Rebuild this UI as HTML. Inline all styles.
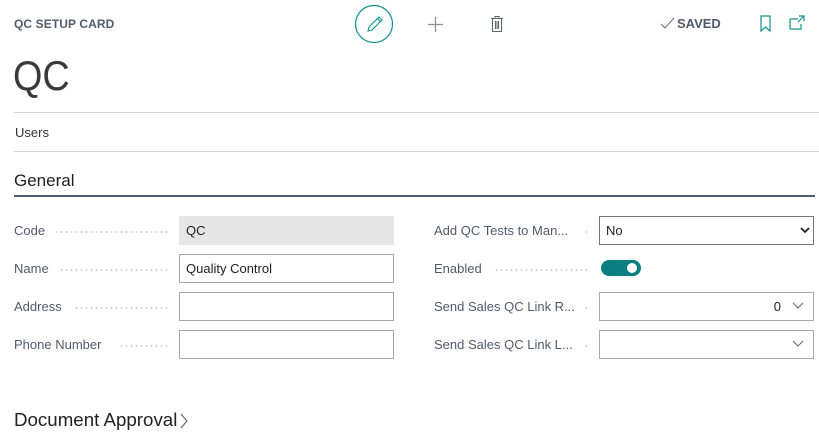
<!DOCTYPE html>
<html><head><meta charset="utf-8"><style>
*{margin:0;padding:0;box-sizing:border-box}
body{width:819px;height:436px;background:#fff;font-family:"Liberation Sans",sans-serif;color:#212121;position:relative;overflow:hidden}
.a{position:absolute;white-space:nowrap}
.lbl{font-size:13px;color:#505C6D}
.dots{position:absolute;height:2px;background:radial-gradient(circle,#b8bcc2 0.7px,transparent 0.9px) 0 0/5px 2px repeat-x}
.inp{position:absolute;height:29px;border:1px solid #a8a8a8;background:#fff;font-size:13px;padding:6px 6px}
</style></head><body>
<div class="a" style="left:14px;top:17px;font-size:12px;font-weight:bold;color:#505C6D;letter-spacing:0.1px">QC SETUP CARD</div>
<svg class="a" style="left:354px;top:4px" width="40" height="40"><circle cx="20" cy="20" r="18.5" fill="none" stroke="#12908e" stroke-width="1.2"/><path d="M14 27 L15 23 L25 13 L28 16 L18 26 Z M23.5 14.5 L26.5 17.5" fill="none" stroke="#12908e" stroke-width="1.1"/></svg>
<svg class="a" style="left:427px;top:16px" width="17" height="17"><path d="M8.5 1V16M1 8.5H16" stroke="#8a8f96" stroke-width="1.3"/></svg>
<svg class="a" style="left:490px;top:15px" width="14" height="18"><path d="M1 3.5H13M5 3.5V1.5H9V3.5M2.5 3.5V16.5H11.5V3.5M5.5 6V14M7 6V14M8.5 6V14" fill="none" stroke="#5c6470" stroke-width="1"/></svg>
<svg class="a" style="left:660px;top:17px" width="16" height="14"><path d="M1 7L5 11L14 1" fill="none" stroke="#6b7280" stroke-width="1"/></svg>
<div class="a" style="left:677px;top:16px;font-size:13px;font-weight:bold;color:#505C6D">SAVED</div>
<svg class="a" style="left:760px;top:15px" width="12" height="18"><path d="M1 1H10V16L5.5 12L1 16Z" fill="none" stroke="#12908e" stroke-width="1.2"/></svg>
<svg class="a" style="left:789px;top:15px" width="18" height="16"><path d="M9 4H1V14H12V9M10 1H15V6M15 1L9 7" fill="none" stroke="#12908e" stroke-width="1.2"/></svg>
<div class="a" style="left:13px;top:52px;font-size:42px;color:#3a3a3a;transform:scaleX(0.9);transform-origin:left">QC</div>
<div class="a" style="left:14px;top:112px;width:805px;height:1px;background:#d6d6d6"></div>
<div class="a" style="left:15px;top:125px;font-size:13px;color:#333">Users</div>
<div class="a" style="left:14px;top:151px;width:805px;height:1px;background:#d6d6d6"></div>
<div class="a" style="left:14px;top:171px;font-size:17px;color:#212121">General</div>
<div class="a" style="left:14px;top:195px;width:801px;height:2px;background:#505C6D"></div>

<div class="a lbl" style="left:14px;top:223px">Code</div><div class="dots" style="left:54px;width:116px;top:231px"></div>
<div class="inp" style="left:179px;top:216px;width:215px;background:#e6e6e7;border-color:#e6e6e7">QC</div>
<div class="a lbl" style="left:14px;top:261px">Name</div><div class="dots" style="left:59px;width:111px;top:269px"></div>
<div class="inp" style="left:179px;top:254px;width:215px">Quality Control</div>
<div class="a lbl" style="left:14px;top:299px">Address</div><div class="dots" style="left:74px;width:96px;top:307px"></div>
<div class="inp" style="left:179px;top:292px;width:215px"></div>
<div class="a lbl" style="left:14px;top:337px">Phone Number</div><div class="dots" style="left:119px;width:51px;top:345px"></div>
<div class="inp" style="left:179px;top:330px;width:215px"></div>

<div class="a lbl" style="left:434px;top:223px">Add QC Tests to Man...</div><div class="dots" style="left:584px;width:4px;top:231px"></div>
<div class="inp" style="left:599px;top:216px;width:215px;border-color:#777">No</div>
<svg class="a" style="left:800px;top:226px" width="10" height="8"><path d="M1 2L5 6L9 2" fill="none" stroke="#222" stroke-width="1.8"/></svg>
<div class="a lbl" style="left:434px;top:261px">Enabled</div><div class="dots" style="left:494px;width:96px;top:269px"></div>
<div class="a" style="left:601px;top:260px;width:40px;height:16px;border-radius:8px;background:#0b8080"></div>
<div class="a" style="left:627px;top:263px;width:10px;height:10px;border-radius:5px;background:#fff"></div>
<div class="a lbl" style="left:434px;top:299px">Send Sales QC Link R...</div><div class="dots" style="left:584px;width:4px;top:307px"></div>
<div class="inp" style="left:599px;top:292px;width:215px;text-align:right;padding-right:32px">0</div>
<svg class="a" style="left:792px;top:302px" width="12" height="8"><path d="M1 1L6 6L11 1" fill="none" stroke="#666" stroke-width="1"/></svg>
<div class="a lbl" style="left:434px;top:337px">Send Sales QC Link L...</div><div class="dots" style="left:584px;width:4px;top:345px"></div>
<div class="inp" style="left:599px;top:330px;width:215px"></div>
<svg class="a" style="left:792px;top:340px" width="12" height="8"><path d="M1 1L6 6L11 1" fill="none" stroke="#666" stroke-width="1"/></svg>

<div class="a" style="left:14px;top:410px;font-size:18px;color:#212121;transform:scaleX(1.04);transform-origin:left">Document Approval</div>
<svg class="a" style="left:179px;top:413px" width="10" height="16"><path d="M2 1L8 8L2 15" fill="none" stroke="#555" stroke-width="1"/></svg>
</body></html>
